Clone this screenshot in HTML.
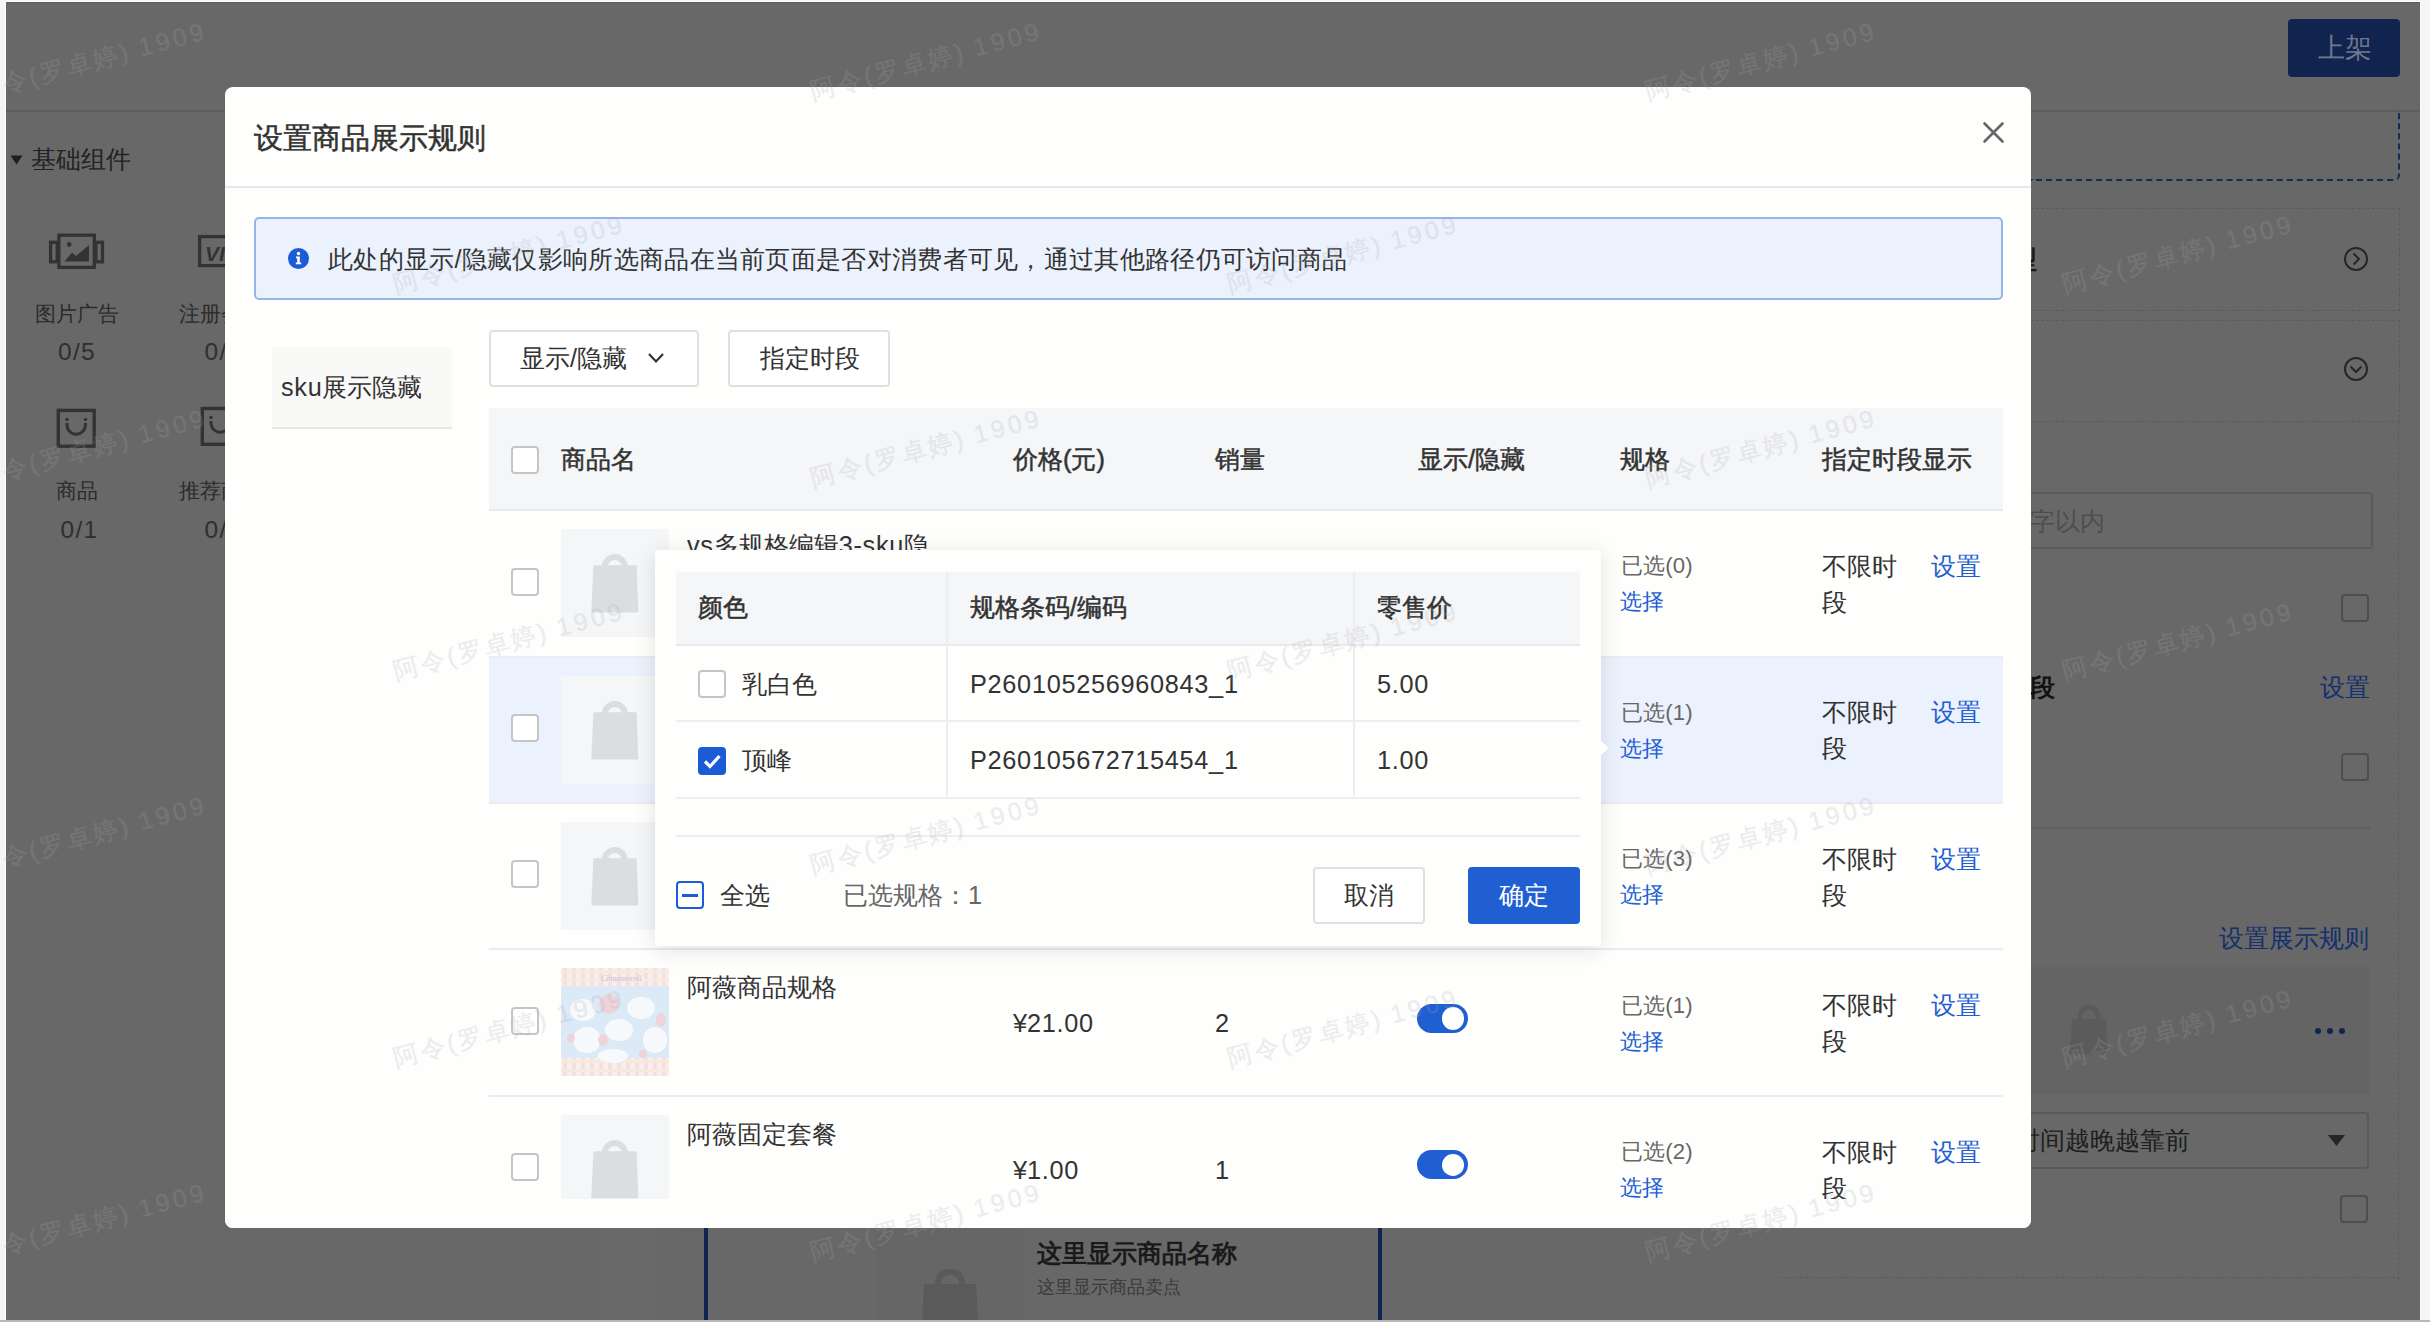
<!DOCTYPE html><html><head><meta charset="utf-8"><style>
html,body{margin:0;padding:0;}
body{width:2430px;height:1322px;overflow:hidden;position:relative;background:#f4f5f7;font-family:"Liberation Sans",sans-serif;}
.t{position:absolute;white-space:nowrap;}
.b{position:absolute;box-sizing:border-box;}
.la{letter-spacing:0.7px;}
.m{-webkit-text-stroke:0.45px currentColor;}
svg{position:absolute;overflow:visible;}
</style></head><body>
<div class="b" style="left:5px;top:1px;width:2416px;height:1319px;background:#fdfdfd;"></div>
<div class="b" style="left:6px;top:2px;width:2414px;height:1318px;background:#686868;"></div>
<div class="b" style="left:6px;top:2px;width:2414px;height:1px;background:#5e5e5e;"></div>
<div class="b" style="left:6px;top:110px;width:2414px;height:2px;background:#5d5d5d;"></div>
<div class="b" style="left:2288px;top:19px;width:112px;height:58px;background:#10244f;border-radius:4px;"></div>
<div class="t" style="left:2318px;top:27.7px;font-size:27px;line-height:40px;color:#6f7890;">上架</div>
<svg style="left:10px;top:155px" width="14" height="10"><path d="M0.5 0.5 L12.5 0.5 L6.5 9.5 Z" fill="#1e1e1e"/></svg>
<div class="t" style="left:30.5px;top:139.2px;font-size:25.1px;line-height:40px;color:#222;">基础组件</div>
<svg style="left:0px;top:0px" width="1" height="1" viewBox="0 0 1 1"></svg>
<svg style="left:48px;top:232px" width="58" height="40" viewBox="48 232 58 40">
<rect x="50.6" y="242.3" width="6.6" height="19.5" fill="none" stroke="#333" stroke-width="3.3"/>
<rect x="95.9" y="242.3" width="6.6" height="19.5" fill="none" stroke="#333" stroke-width="3.3"/>
<rect x="58.9" y="235.2" width="35.4" height="32.2" fill="none" stroke="#333" stroke-width="3.3"/>
<circle cx="69.2" cy="244.4" r="2.3" fill="#333"/>
<path d="M64.5 261.6 L72 252.5 L76 256 L89 245 L89 261.6 Z" fill="#333"/>
</svg>
<div class="t" style="left:34.5px;top:294.2px;font-size:21px;line-height:40px;color:#2b2b2b;">图片广告</div>
<div class="t" style="left:58px;top:332.2px;font-size:24.5px;line-height:40px;color:#2f2f2f;letter-spacing:1.3px;">0/5</div>
<svg style="left:196px;top:232px" width="40" height="40" viewBox="196 232 40 40">
<rect x="199.6" y="236.6" width="36" height="29" fill="none" stroke="#333" stroke-width="3.3"/>
<text x="205" y="261" font-family="Liberation Sans" font-style="italic" font-weight="bold" font-size="21" fill="#333">VI</text>
</svg>
<div class="t" style="left:178.5px;top:294.2px;font-size:21px;line-height:40px;color:#2b2b2b;">注册会员</div>
<div class="t" style="left:204.5px;top:332.2px;font-size:24.5px;line-height:40px;color:#2f2f2f;letter-spacing:1.3px;">0/</div>
<svg style="left:54px;top:406px" width="46" height="46" viewBox="54 406 46 46">
<rect x="58.3" y="410.4" width="35.9" height="35.8" fill="none" stroke="#333" stroke-width="3.4"/>
<path d="M67 423 V425 A9.2 9.2 0 0 0 85.4 425 V423" fill="none" stroke="#333" stroke-width="3"/>
<circle cx="67" cy="419.5" r="1.7" fill="#333"/><circle cx="85.5" cy="419.5" r="1.7" fill="#333"/>
</svg>
<div class="t" style="left:56px;top:471.2px;font-size:21px;line-height:40px;color:#2b2b2b;">商品</div>
<div class="t" style="left:60.5px;top:510.2px;font-size:24.5px;line-height:40px;color:#2f2f2f;letter-spacing:1.3px;">0/1</div>
<svg style="left:197px;top:404px" width="46" height="46" viewBox="197 404 46 46">
<rect x="202.3" y="408.5" width="35.9" height="35.8" fill="none" stroke="#333" stroke-width="3.4"/>
<path d="M211 421 V423 A9.2 9.2 0 0 0 229.4 423 V421" fill="none" stroke="#333" stroke-width="3"/>
<circle cx="211" cy="417.5" r="1.7" fill="#333"/>
</svg>
<div class="t" style="left:178.5px;top:471.2px;font-size:21px;line-height:40px;color:#2b2b2b;">推荐商品</div>
<div class="t" style="left:204.5px;top:510.2px;font-size:24.5px;line-height:40px;color:#2f2f2f;letter-spacing:1.3px;">0/</div>
<div class="b" style="left:2031px;top:110px;width:369px;height:71px;border:2px dashed #142a5a;border-top:none;border-left:none;border-radius:0 0 6px 0;"></div>
<div class="b" style="left:2031px;top:208px;width:369px;height:103px;border:1.5px dashed #5a5a5a;border-left:none;"></div>
<div class="t" style="left:2012px;top:238.7px;font-size:25.3px;line-height:40px;color:#1a1a1a;font-weight:bold;">型</div>
<svg style="left:2343px;top:246px" width="26" height="26" viewBox="0 0 26 26"><circle cx="13" cy="13" r="11" fill="none" stroke="#262626" stroke-width="2"/><path d="M10.5 7.5 L16 13 L10.5 18.5" fill="none" stroke="#262626" stroke-width="2"/></svg>
<div class="b" style="left:2031px;top:320px;width:369px;height:102px;border:1.5px dashed #5a5a5a;border-left:none;border-bottom:none;"></div>
<svg style="left:2343px;top:356px" width="26" height="26" viewBox="0 0 26 26"><circle cx="13" cy="13" r="11" fill="none" stroke="#262626" stroke-width="2"/><path d="M7.5 10.5 L13 16 L18.5 10.5" fill="none" stroke="#262626" stroke-width="2"/></svg>
<div class="b" style="left:2031px;top:421px;width:369px;height:2px;border-top:1.5px dashed #5a5a5a;"></div>
<div class="b" style="left:2398px;top:422px;width:2px;height:858px;border-left:1.5px dashed #5a5a5a;"></div>
<div class="b" style="left:2031px;top:492px;width:342px;height:57px;border:2px solid #5a5a5a;border-left:none;border-radius:0 4px 4px 0;"></div>
<div class="t" style="left:2030px;top:500.7px;font-size:25.3px;line-height:40px;color:#4e4e4e;">字以内</div>
<div class="b" style="left:2341px;top:594px;width:28px;height:28px;border:2px solid #4e4e4e;border-radius:4px;"></div>
<div class="t" style="left:2030px;top:666.7px;font-size:25.3px;line-height:40px;color:#111;font-weight:bold;">段</div>
<div class="t" style="left:2320px;top:666.7px;font-size:25.3px;line-height:40px;color:#14306e;">设置</div>
<div class="b" style="left:2341px;top:753px;width:28px;height:28px;border:2px solid #4e4e4e;border-radius:4px;"></div>
<div class="b" style="left:2031px;top:827px;width:339px;height:2px;background:#5f5f5f;"></div>
<div class="t" style="left:2219px;top:917.7px;font-size:25.3px;line-height:40px;color:#14306e;">设置展示规则</div>
<div class="b" style="left:2031px;top:967px;width:339px;height:127px;background:#646464;"></div>
<svg style="left:2068px;top:1005px" width="44" height="50" viewBox="0 0 44 50"><path d="M12 14 Q12 2 21 2 Q30 2 30 14" fill="none" stroke="#5b5b5b" stroke-width="5"/><path d="M4 14 L38 14 L40 49 L2 49 Z" fill="#5b5b5b"/></svg>
<div class="b" style="left:2315px;top:1027.5px;width:6px;height:6.0px;background:#10244f;border-radius:50%;"></div>
<div class="b" style="left:2327px;top:1027.5px;width:6px;height:6.0px;background:#10244f;border-radius:50%;"></div>
<div class="b" style="left:2339px;top:1027.5px;width:6px;height:6.0px;background:#10244f;border-radius:50%;"></div>
<div class="b" style="left:2031px;top:1112px;width:338px;height:57px;border:2px solid #5a5a5a;border-left:none;border-radius:0 4px 4px 0;"></div>
<div class="t" style="left:2015px;top:1120.7px;font-size:24.7px;line-height:40px;color:#1e1e1e;">时间越晚越靠前</div>
<svg style="left:2327px;top:1134px" width="20" height="14"><path d="M1 1 L18 1 L9.5 12 Z" fill="#262626"/></svg>
<div class="b" style="left:2340px;top:1195px;width:28px;height:28px;border:2px solid #4e4e4e;border-radius:4px;"></div>
<div class="b" style="left:1780px;top:1277px;width:620px;height:2px;border-top:1.5px dashed #5a5a5a;"></div>
<div class="b" style="left:600px;top:1228px;width:106px;height:92px;background:linear-gradient(90deg,#6a6a6a,#676767);"></div>
<div class="b" style="left:704px;top:1228px;width:4px;height:92px;background:#10244f;"></div>
<div class="b" style="left:1378px;top:1228px;width:4px;height:92px;background:#10244f;"></div>
<div class="b" style="left:876px;top:1228px;width:148px;height:92px;background:#666;border-radius:10px 10px 0 0;"></div>
<svg style="left:918px;top:1268px" width="64" height="56" viewBox="0 0 64 56"><path d="M20 16 Q20 4 32 4 Q44 4 44 16" fill="none" stroke="#5a5a5a" stroke-width="6"/><path d="M6 16 L58 16 L60 56 L4 56 Z" fill="#5a5a5a"/></svg>
<div class="t" style="left:1037px;top:1232.7px;font-size:25.3px;line-height:40px;color:#1a1a1a;font-weight:bold;">这里显示商品名称</div>
<div class="t" style="left:1037px;top:1266.7px;font-size:17.9px;line-height:40px;color:#3a3a3a;">这里显示商品卖点</div>
<div class="b" style="left:0px;top:1320px;width:2430px;height:2px;background:#b8b8b6;"></div>
<div class="b" style="left:225px;top:87px;width:1806px;height:1141px;background:#fefefd;border-radius:8px;"></div>
<div class="t" style="left:254px;top:118.3px;font-size:28.6px;line-height:40px;color:#333;-webkit-text-stroke:0.5px #333;">设置商品展示规则</div>
<svg style="left:1983px;top:122px" width="21" height="21" viewBox="0 0 21 21"><path d="M1.5 1.5 L19.5 19.5 M19.5 1.5 L1.5 19.5" stroke="#666" stroke-width="2.6" stroke-linecap="round"/></svg>
<div class="b" style="left:225px;top:186px;width:1806px;height:2px;background:#e6e8eb;"></div>
<div class="b" style="left:254px;top:217px;width:1749px;height:83px;background:#ebf2fd;border:2px solid #97b5e6;border-radius:5px;"></div>
<svg style="left:288px;top:248px" width="21" height="21" viewBox="0 0 21 21"><circle cx="10.5" cy="10.5" r="10.5" fill="#1b5cd6"/><circle cx="10.5" cy="5.5" r="1.7" fill="#fff"/><path d="M8 8.6 H11.8 V14.6 H13.2 V16.2 H7.8 V14.6 H9.2 V10.2 H8 Z" fill="#fff"/></svg>
<div class="t" style="left:328px;top:238.7px;font-size:25.3px;line-height:40px;color:#333;letter-spacing:0.3px;">此处的显示/隐藏仅影响所选商品在当前页面是否对消费者可见，通过其他路径仍可访问商品</div>
<div class="b" style="left:272px;top:347px;width:180px;height:82px;background:#f9f9f8;border-bottom:2px solid #e6e6e6;"></div>
<div class="t" style="left:281px;top:366.7px;font-size:25.3px;line-height:40px;color:#333;"><span class="la">sku</span>展示隐藏</div>
<div class="b" style="left:489px;top:330px;width:210px;height:57px;border:2px solid #e0e0e0;border-radius:4px;background:#fff;"></div>
<div class="t" style="left:520px;top:337.7px;font-size:25.3px;line-height:40px;color:#333;">显示/隐藏</div>
<svg style="left:647px;top:352px" width="18" height="12" viewBox="0 0 18 12"><path d="M2 2 L9 9.5 L16 2" fill="none" stroke="#333" stroke-width="2.2"/></svg>
<div class="b" style="left:728px;top:330px;width:162px;height:57px;border:2px solid #e0e0e0;border-radius:4px;background:#fff;"></div>
<div class="t" style="left:760px;top:337.7px;font-size:25.3px;line-height:40px;color:#333;">指定时段</div>
<div class="b" style="left:489px;top:408px;width:1514px;height:103px;background:#f5f6f8;border-bottom:2px solid #e8eaed;"></div>
<div class="b" style="left:511px;top:446px;width:28px;height:28px;border:2px solid #c4c5c7;border-radius:4px;background:#fff;"></div>
<div class="t" style="left:561px;top:439.1px;font-size:25.3px;line-height:40px;color:#333;-webkit-text-stroke:0.5px #333;">商品名</div>
<div class="t" style="left:1013px;top:439.1px;font-size:25.3px;line-height:40px;color:#333;-webkit-text-stroke:0.5px #333;">价格(元)</div>
<div class="t" style="left:1215px;top:439.1px;font-size:25.3px;line-height:40px;color:#333;-webkit-text-stroke:0.5px #333;">销量</div>
<div class="t" style="left:1418px;top:439.1px;font-size:25.3px;line-height:40px;color:#333;-webkit-text-stroke:0.5px #333;">显示/隐藏</div>
<div class="t" style="left:1620px;top:439.1px;font-size:25.3px;line-height:40px;color:#333;-webkit-text-stroke:0.5px #333;">规格</div>
<div class="t" style="left:1822px;top:439.1px;font-size:25.3px;line-height:40px;color:#333;-webkit-text-stroke:0.5px #333;">指定时段显示</div>
<div class="b" style="left:489px;top:657px;width:1514px;height:145px;background:#ebf2fd;"></div>
<div class="b" style="left:489px;top:656px;width:1514px;height:2px;background:#eaecef;"></div>
<div class="b" style="left:511px;top:568px;width:28px;height:28px;border:2px solid #c4c5c7;border-radius:4px;background:#fff;"></div>
<div class="b" style="left:561px;top:529px;width:108px;height:108px;background:#f5f6f8;border-radius:2px;"></div>
<svg style="left:561px;top:529px" width="108" height="108" viewBox="0 0 108 108"><path d="M43.8 38 A10 10 0 0 1 63.8 38" fill="none" stroke="#dcdddf" stroke-width="6"/><path d="M34.5 36.3 L74.5 36.3 Q75.6 36.3 75.7 37.5 L77.3 82 Q77.3 83.6 75.8 83.6 L31.8 83.6 Q30.3 83.6 30.3 82 L32.4 37.5 Q32.5 36.3 34.5 36.3 Z" fill="#dcdddf"/></svg>
<div class="t" style="left:1621px;top:546.4px;font-size:22.2px;line-height:40px;color:#666;letter-spacing:0.1px;">已选(0)</div>
<div class="t" style="left:1620px;top:582.2px;font-size:22.2px;line-height:40px;color:#1f5fd2;">选择</div>
<div class="t" style="left:1822px;top:545.9px;font-size:25.3px;line-height:40px;color:#333;">不限时</div>
<div class="t" style="left:1822px;top:581.9px;font-size:25.3px;line-height:40px;color:#333;">段</div>
<div class="t" style="left:1931px;top:545.9px;font-size:25.3px;line-height:40px;color:#1f5fd2;">设置</div>
<div class="b" style="left:489px;top:802px;width:1514px;height:2px;background:#eaecef;"></div>
<div class="b" style="left:511px;top:714px;width:28px;height:28px;border:2px solid #c4c5c7;border-radius:4px;background:#fff;"></div>
<div class="b" style="left:561px;top:676px;width:108px;height:108px;background:#f5f6f8;border-radius:2px;"></div>
<svg style="left:561px;top:676px" width="108" height="108" viewBox="0 0 108 108"><path d="M43.8 38 A10 10 0 0 1 63.8 38" fill="none" stroke="#dcdddf" stroke-width="6"/><path d="M34.5 36.3 L74.5 36.3 Q75.6 36.3 75.7 37.5 L77.3 82 Q77.3 83.6 75.8 83.6 L31.8 83.6 Q30.3 83.6 30.3 82 L32.4 37.5 Q32.5 36.3 34.5 36.3 Z" fill="#dcdddf"/></svg>
<div class="t" style="left:1621px;top:692.8px;font-size:22.2px;line-height:40px;color:#666;letter-spacing:0.1px;">已选(1)</div>
<div class="t" style="left:1620px;top:728.6px;font-size:22.2px;line-height:40px;color:#1f5fd2;">选择</div>
<div class="t" style="left:1822px;top:692.3px;font-size:25.3px;line-height:40px;color:#333;">不限时</div>
<div class="t" style="left:1822px;top:728.3px;font-size:25.3px;line-height:40px;color:#333;">段</div>
<div class="t" style="left:1931px;top:692.3px;font-size:25.3px;line-height:40px;color:#1f5fd2;">设置</div>
<div class="b" style="left:489px;top:948px;width:1514px;height:2px;background:#eaecef;"></div>
<div class="b" style="left:511px;top:860px;width:28px;height:28px;border:2px solid #c4c5c7;border-radius:4px;background:#fff;"></div>
<div class="b" style="left:561px;top:822px;width:108px;height:108px;background:#f5f6f8;border-radius:2px;"></div>
<svg style="left:561px;top:822px" width="108" height="108" viewBox="0 0 108 108"><path d="M43.8 38 A10 10 0 0 1 63.8 38" fill="none" stroke="#dcdddf" stroke-width="6"/><path d="M34.5 36.3 L74.5 36.3 Q75.6 36.3 75.7 37.5 L77.3 82 Q77.3 83.6 75.8 83.6 L31.8 83.6 Q30.3 83.6 30.3 82 L32.4 37.5 Q32.5 36.3 34.5 36.3 Z" fill="#dcdddf"/></svg>
<div class="t" style="left:1621px;top:839.2px;font-size:22.2px;line-height:40px;color:#666;letter-spacing:0.1px;">已选(3)</div>
<div class="t" style="left:1620px;top:875.0px;font-size:22.2px;line-height:40px;color:#1f5fd2;">选择</div>
<div class="t" style="left:1822px;top:838.7px;font-size:25.3px;line-height:40px;color:#333;">不限时</div>
<div class="t" style="left:1822px;top:874.7px;font-size:25.3px;line-height:40px;color:#333;">段</div>
<div class="t" style="left:1931px;top:838.7px;font-size:25.3px;line-height:40px;color:#1f5fd2;">设置</div>
<div class="b" style="left:489px;top:1095px;width:1514px;height:2px;background:#eaecef;"></div>
<div class="b" style="left:511px;top:1007px;width:28px;height:28px;border:2px solid #c4c5c7;border-radius:4px;background:#fff;"></div>
<svg style="left:561px;top:968px" width="108" height="108" viewBox="0 0 108 108">
<rect x="0" y="0" width="108" height="108" fill="#f9eeee"/>
<g opacity="0.5"><rect x="2" y="0" width="4" height="108" fill="#f3d3d3"/><rect x="11" y="0" width="4" height="108" fill="#f3d3d3"/><rect x="20" y="0" width="4" height="108" fill="#f3d3d3"/><rect x="29" y="0" width="4" height="108" fill="#f3d3d3"/><rect x="38" y="0" width="4" height="108" fill="#f3d3d3"/><rect x="47" y="0" width="4" height="108" fill="#f3d3d3"/><rect x="56" y="0" width="4" height="108" fill="#f3d3d3"/><rect x="65" y="0" width="4" height="108" fill="#f3d3d3"/><rect x="74" y="0" width="4" height="108" fill="#f3d3d3"/><rect x="83" y="0" width="4" height="108" fill="#f3d3d3"/><rect x="92" y="0" width="4" height="108" fill="#f3d3d3"/><rect x="101" y="0" width="4" height="108" fill="#f3d3d3"/><rect x="0" y="2" width="108" height="3" fill="#f6e6cf"/><rect x="0" y="11" width="108" height="3" fill="#f6e6cf"/><rect x="0" y="20" width="108" height="3" fill="#f6e6cf"/><rect x="0" y="29" width="108" height="3" fill="#f6e6cf"/><rect x="0" y="38" width="108" height="3" fill="#f6e6cf"/><rect x="0" y="47" width="108" height="3" fill="#f6e6cf"/><rect x="0" y="56" width="108" height="3" fill="#f6e6cf"/><rect x="0" y="65" width="108" height="3" fill="#f6e6cf"/><rect x="0" y="74" width="108" height="3" fill="#f6e6cf"/><rect x="0" y="83" width="108" height="3" fill="#f6e6cf"/><rect x="0" y="92" width="108" height="3" fill="#f6e6cf"/><rect x="0" y="101" width="108" height="3" fill="#f6e6cf"/></g>
<rect x="0" y="18" width="108" height="72" fill="#dce9f7"/>
<text x="40" y="13" font-size="8" font-style="italic" fill="#c5bfe0" font-family="Liberation Serif">Cinnamoroll</text>
<g fill="#f7f9fc">
<ellipse cx="22" cy="42" rx="13" ry="11"/><ellipse cx="80" cy="40" rx="14" ry="11"/>
<ellipse cx="58" cy="62" rx="14" ry="11"/><ellipse cx="26" cy="72" rx="14" ry="13"/>
<ellipse cx="94" cy="72" rx="12" ry="13"/><ellipse cx="52" cy="88" rx="15" ry="7"/>
</g>
<g fill="#f2cfd3" opacity="0.8">
<ellipse cx="48" cy="36" rx="10" ry="10"/><ellipse cx="100" cy="52" rx="5" ry="7"/>
<ellipse cx="42" cy="72" rx="5" ry="6"/><ellipse cx="82" cy="86" rx="4" ry="4"/><ellipse cx="10" cy="70" rx="4" ry="5"/>
</g>
</svg>
<div class="t" style="left:687px;top:967.1px;font-size:25.3px;line-height:40px;color:#333;">阿薇商品规格</div>
<div class="t" style="left:1013px;top:1003.2px;font-size:25.3px;line-height:40px;color:#333;">¥<span class="la">21.00</span></div>
<div class="t" style="left:1215px;top:1003.2px;font-size:25.3px;line-height:40px;color:#333;"><span class="la">2</span></div>
<div class="b" style="left:1417px;top:1004px;width:51px;height:29px;background:#1f5fd2;border-radius:16px;"></div>
<div class="b" style="left:1441.8px;top:1007px;width:22.600000000000136px;height:23px;background:#fff;border-radius:50%;"></div>
<div class="t" style="left:1621px;top:985.7px;font-size:22.2px;line-height:40px;color:#666;letter-spacing:0.1px;">已选(1)</div>
<div class="t" style="left:1620px;top:1021.5px;font-size:22.2px;line-height:40px;color:#1f5fd2;">选择</div>
<div class="t" style="left:1822px;top:985.2px;font-size:25.3px;line-height:40px;color:#333;">不限时</div>
<div class="t" style="left:1822px;top:1021.2px;font-size:25.3px;line-height:40px;color:#333;">段</div>
<div class="t" style="left:1931px;top:985.2px;font-size:25.3px;line-height:40px;color:#1f5fd2;">设置</div>
<div class="b" style="left:511px;top:1153px;width:28px;height:28px;border:2px solid #c4c5c7;border-radius:4px;background:#fff;"></div>
<div class="b" style="left:561px;top:1115px;width:108px;height:108px;background:#f5f6f8;border-radius:2px;"></div>
<svg style="left:561px;top:1115px" width="108" height="108" viewBox="0 0 108 108"><path d="M43.8 38 A10 10 0 0 1 63.8 38" fill="none" stroke="#dcdddf" stroke-width="6"/><path d="M34.5 36.3 L74.5 36.3 Q75.6 36.3 75.7 37.5 L77.3 82 Q77.3 83.6 75.8 83.6 L31.8 83.6 Q30.3 83.6 30.3 82 L32.4 37.5 Q32.5 36.3 34.5 36.3 Z" fill="#dcdddf"/></svg>
<div class="t" style="left:687px;top:1113.5px;font-size:25.3px;line-height:40px;color:#333;">阿薇固定套餐</div>
<div class="t" style="left:1013px;top:1149.6px;font-size:25.3px;line-height:40px;color:#333;">¥<span class="la">1.00</span></div>
<div class="t" style="left:1215px;top:1149.6px;font-size:25.3px;line-height:40px;color:#333;"><span class="la">1</span></div>
<div class="b" style="left:1417px;top:1150px;width:51px;height:29px;background:#1f5fd2;border-radius:16px;"></div>
<div class="b" style="left:1441.8px;top:1154px;width:22.600000000000136px;height:22px;background:#fff;border-radius:50%;"></div>
<div class="t" style="left:1621px;top:1132.1px;font-size:22.2px;line-height:40px;color:#666;letter-spacing:0.1px;">已选(2)</div>
<div class="t" style="left:1620px;top:1167.9px;font-size:22.2px;line-height:40px;color:#1f5fd2;">选择</div>
<div class="t" style="left:1822px;top:1131.6px;font-size:25.3px;line-height:40px;color:#333;">不限时</div>
<div class="t" style="left:1822px;top:1167.6px;font-size:25.3px;line-height:40px;color:#333;">段</div>
<div class="t" style="left:1931px;top:1131.6px;font-size:25.3px;line-height:40px;color:#1f5fd2;">设置</div>
<div class="t" style="left:687px;top:524.7px;font-size:25.3px;line-height:40px;color:#333;"><span class="la">vs</span>多规格编辑<span class="la">3-sku</span>隐</div>
<div class="b" style="left:225px;top:1199px;width:1806px;height:29px;background:#fefefd;border-radius:0 0 8px 8px;"></div>
<div class="b" style="left:655px;top:550px;width:946px;height:396px;background:#fefefd;box-shadow:0 3px 22px rgba(0,0,0,0.12);border-radius:2px;"></div>
<svg style="left:1598px;top:738px" width="14" height="20" viewBox="0 0 14 20"><path d="M0 0 L11 10 L0 20 Z" fill="#fefefd"/></svg>
<div class="b" style="left:676px;top:572px;width:904px;height:74px;background:#f5f6f8;"></div>
<div class="b" style="left:676px;top:644px;width:904px;height:2px;background:#e8eaed;"></div>
<div class="b" style="left:676px;top:720px;width:904px;height:2px;background:#eceef1;"></div>
<div class="b" style="left:676px;top:797px;width:904px;height:2px;background:#eceef1;"></div>
<div class="b" style="left:946px;top:572px;width:2px;height:226px;background:#eceef1;"></div>
<div class="b" style="left:1353px;top:572px;width:2px;height:226px;background:#eceef1;"></div>
<div class="b" style="left:676px;top:835px;width:904px;height:2px;background:#eceef1;"></div>
<div class="t" style="left:698px;top:587.1px;font-size:25.3px;line-height:40px;color:#333;-webkit-text-stroke:0.5px #333;">颜色</div>
<div class="t" style="left:970px;top:587.1px;font-size:25.3px;line-height:40px;color:#333;-webkit-text-stroke:0.5px #333;">规格条码/编码</div>
<div class="t" style="left:1377px;top:587.1px;font-size:25.3px;line-height:40px;color:#333;-webkit-text-stroke:0.5px #333;">零售价</div>
<div class="b" style="left:698px;top:670px;width:28px;height:28px;border:2px solid #c4c5c7;border-radius:4px;background:#fff;"></div>
<div class="t" style="left:742px;top:663.7px;font-size:25.3px;line-height:40px;color:#333;">乳白色</div>
<div class="t" style="left:970px;top:663.7px;font-size:25.3px;line-height:40px;color:#333;"><span class="la">P260105256960843_1</span></div>
<div class="t" style="left:1377px;top:663.7px;font-size:25.3px;line-height:40px;color:#333;"><span class="la">5.00</span></div>
<div class="b" style="left:698px;top:747px;width:28px;height:28px;background:#1b5cd6;border-radius:4px;"></div>
<svg style="left:698px;top:747px" width="28" height="28" viewBox="0 0 28 28"><path d="M7 14.5 L12 19.5 L21.5 9" fill="none" stroke="#fff" stroke-width="3.2"/></svg>
<div class="t" style="left:742px;top:739.7px;font-size:25.3px;line-height:40px;color:#333;">顶峰</div>
<div class="t" style="left:970px;top:739.7px;font-size:25.3px;line-height:40px;color:#333;"><span class="la">P260105672715454_1</span></div>
<div class="t" style="left:1377px;top:739.7px;font-size:25.3px;line-height:40px;color:#333;"><span class="la">1.00</span></div>
<div class="b" style="left:676px;top:881px;width:28px;height:28px;border:2px solid #1b5cd6;border-radius:4px;background:#fff;"></div>
<div class="b" style="left:682px;top:893.5px;width:16px;height:3.0px;background:#1b5cd6;"></div>
<div class="t" style="left:720px;top:874.7px;font-size:25.3px;line-height:40px;color:#333;">全选</div>
<div class="t" style="left:843px;top:874.7px;font-size:25.3px;line-height:40px;color:#666;">已选规格：<span class="la">1</span></div>
<div class="b" style="left:1313px;top:867px;width:112px;height:57px;border:2px solid #e0e0e0;border-radius:4px;background:#fff;"></div>
<div class="t" style="left:1344px;top:874.7px;font-size:25.3px;line-height:40px;color:#333;">取消</div>
<div class="b" style="left:1468px;top:867px;width:112px;height:57px;background:#1f5fd2;border-radius:4px;"></div>
<div class="t" style="left:1499px;top:874.7px;font-size:25.3px;line-height:40px;color:#fff;">确定</div>
<div class="t" style="left:-20px;top:75.5px;font-size:25px;line-height:30px;letter-spacing:2.5px;color:rgb(165,168,176);-webkit-text-stroke:0.35px rgb(165,168,176);opacity:0.2;transform:rotate(-15deg);transform-origin:0 100%;">阿令(罗卓婷) <span style="letter-spacing:3.6px">1909</span></div>
<div class="t" style="left:815px;top:75.5px;font-size:25px;line-height:30px;letter-spacing:2.5px;color:rgb(165,168,176);-webkit-text-stroke:0.35px rgb(165,168,176);opacity:0.2;transform:rotate(-15deg);transform-origin:0 100%;">阿令(罗卓婷) <span style="letter-spacing:3.6px">1909</span></div>
<div class="t" style="left:1650px;top:75.5px;font-size:25px;line-height:30px;letter-spacing:2.5px;color:rgb(165,168,176);-webkit-text-stroke:0.35px rgb(165,168,176);opacity:0.2;transform:rotate(-15deg);transform-origin:0 100%;">阿令(罗卓婷) <span style="letter-spacing:3.6px">1909</span></div>
<div class="t" style="left:398px;top:269.0px;font-size:25px;line-height:30px;letter-spacing:2.5px;color:rgb(165,168,176);-webkit-text-stroke:0.35px rgb(165,168,176);opacity:0.2;transform:rotate(-15deg);transform-origin:0 100%;">阿令(罗卓婷) <span style="letter-spacing:3.6px">1909</span></div>
<div class="t" style="left:1232px;top:269.0px;font-size:25px;line-height:30px;letter-spacing:2.5px;color:rgb(165,168,176);-webkit-text-stroke:0.35px rgb(165,168,176);opacity:0.2;transform:rotate(-15deg);transform-origin:0 100%;">阿令(罗卓婷) <span style="letter-spacing:3.6px">1909</span></div>
<div class="t" style="left:2067px;top:269.0px;font-size:25px;line-height:30px;letter-spacing:2.5px;color:rgb(165,168,176);-webkit-text-stroke:0.35px rgb(165,168,176);opacity:0.2;transform:rotate(-15deg);transform-origin:0 100%;">阿令(罗卓婷) <span style="letter-spacing:3.6px">1909</span></div>
<div class="t" style="left:-20px;top:462.5px;font-size:25px;line-height:30px;letter-spacing:2.5px;color:rgb(165,168,176);-webkit-text-stroke:0.35px rgb(165,168,176);opacity:0.2;transform:rotate(-15deg);transform-origin:0 100%;">阿令(罗卓婷) <span style="letter-spacing:3.6px">1909</span></div>
<div class="t" style="left:815px;top:462.5px;font-size:25px;line-height:30px;letter-spacing:2.5px;color:rgb(165,168,176);-webkit-text-stroke:0.35px rgb(165,168,176);opacity:0.2;transform:rotate(-15deg);transform-origin:0 100%;">阿令(罗卓婷) <span style="letter-spacing:3.6px">1909</span></div>
<div class="t" style="left:1650px;top:462.5px;font-size:25px;line-height:30px;letter-spacing:2.5px;color:rgb(165,168,176);-webkit-text-stroke:0.35px rgb(165,168,176);opacity:0.2;transform:rotate(-15deg);transform-origin:0 100%;">阿令(罗卓婷) <span style="letter-spacing:3.6px">1909</span></div>
<div class="t" style="left:398px;top:656.0px;font-size:25px;line-height:30px;letter-spacing:2.5px;color:rgb(165,168,176);-webkit-text-stroke:0.35px rgb(165,168,176);opacity:0.2;transform:rotate(-15deg);transform-origin:0 100%;">阿令(罗卓婷) <span style="letter-spacing:3.6px">1909</span></div>
<div class="t" style="left:1232px;top:656.0px;font-size:25px;line-height:30px;letter-spacing:2.5px;color:rgb(165,168,176);-webkit-text-stroke:0.35px rgb(165,168,176);opacity:0.2;transform:rotate(-15deg);transform-origin:0 100%;">阿令(罗卓婷) <span style="letter-spacing:3.6px">1909</span></div>
<div class="t" style="left:2067px;top:656.0px;font-size:25px;line-height:30px;letter-spacing:2.5px;color:rgb(165,168,176);-webkit-text-stroke:0.35px rgb(165,168,176);opacity:0.2;transform:rotate(-15deg);transform-origin:0 100%;">阿令(罗卓婷) <span style="letter-spacing:3.6px">1909</span></div>
<div class="t" style="left:-20px;top:849.5px;font-size:25px;line-height:30px;letter-spacing:2.5px;color:rgb(165,168,176);-webkit-text-stroke:0.35px rgb(165,168,176);opacity:0.2;transform:rotate(-15deg);transform-origin:0 100%;">阿令(罗卓婷) <span style="letter-spacing:3.6px">1909</span></div>
<div class="t" style="left:815px;top:849.5px;font-size:25px;line-height:30px;letter-spacing:2.5px;color:rgb(165,168,176);-webkit-text-stroke:0.35px rgb(165,168,176);opacity:0.2;transform:rotate(-15deg);transform-origin:0 100%;">阿令(罗卓婷) <span style="letter-spacing:3.6px">1909</span></div>
<div class="t" style="left:1650px;top:849.5px;font-size:25px;line-height:30px;letter-spacing:2.5px;color:rgb(165,168,176);-webkit-text-stroke:0.35px rgb(165,168,176);opacity:0.2;transform:rotate(-15deg);transform-origin:0 100%;">阿令(罗卓婷) <span style="letter-spacing:3.6px">1909</span></div>
<div class="t" style="left:398px;top:1043.0px;font-size:25px;line-height:30px;letter-spacing:2.5px;color:rgb(165,168,176);-webkit-text-stroke:0.35px rgb(165,168,176);opacity:0.2;transform:rotate(-15deg);transform-origin:0 100%;">阿令(罗卓婷) <span style="letter-spacing:3.6px">1909</span></div>
<div class="t" style="left:1232px;top:1043.0px;font-size:25px;line-height:30px;letter-spacing:2.5px;color:rgb(165,168,176);-webkit-text-stroke:0.35px rgb(165,168,176);opacity:0.2;transform:rotate(-15deg);transform-origin:0 100%;">阿令(罗卓婷) <span style="letter-spacing:3.6px">1909</span></div>
<div class="t" style="left:2067px;top:1043.0px;font-size:25px;line-height:30px;letter-spacing:2.5px;color:rgb(165,168,176);-webkit-text-stroke:0.35px rgb(165,168,176);opacity:0.2;transform:rotate(-15deg);transform-origin:0 100%;">阿令(罗卓婷) <span style="letter-spacing:3.6px">1909</span></div>
<div class="t" style="left:-20px;top:1236.5px;font-size:25px;line-height:30px;letter-spacing:2.5px;color:rgb(165,168,176);-webkit-text-stroke:0.35px rgb(165,168,176);opacity:0.2;transform:rotate(-15deg);transform-origin:0 100%;">阿令(罗卓婷) <span style="letter-spacing:3.6px">1909</span></div>
<div class="t" style="left:815px;top:1236.5px;font-size:25px;line-height:30px;letter-spacing:2.5px;color:rgb(165,168,176);-webkit-text-stroke:0.35px rgb(165,168,176);opacity:0.2;transform:rotate(-15deg);transform-origin:0 100%;">阿令(罗卓婷) <span style="letter-spacing:3.6px">1909</span></div>
<div class="t" style="left:1650px;top:1236.5px;font-size:25px;line-height:30px;letter-spacing:2.5px;color:rgb(165,168,176);-webkit-text-stroke:0.35px rgb(165,168,176);opacity:0.2;transform:rotate(-15deg);transform-origin:0 100%;">阿令(罗卓婷) <span style="letter-spacing:3.6px">1909</span></div>
</body></html>
